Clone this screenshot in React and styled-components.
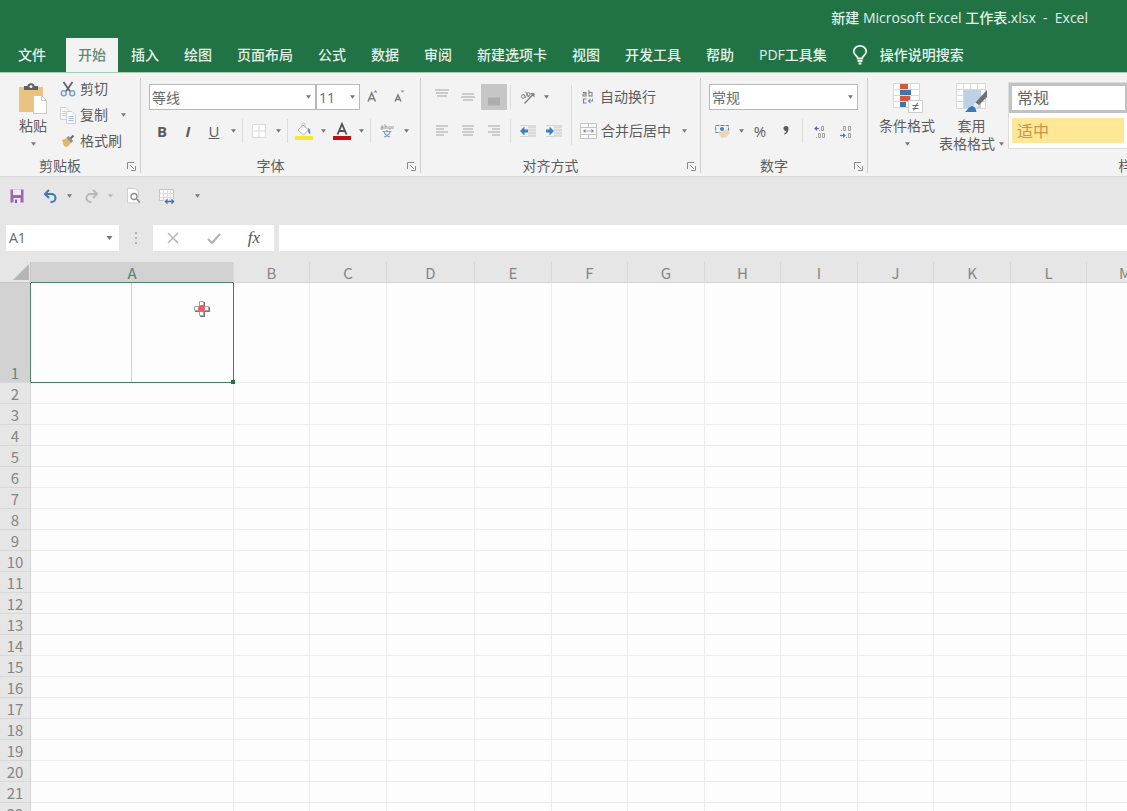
// src/App.jsx
import styled, { createGlobalStyle } from "styled-components";

const GlobalStyle = createGlobalStyle`
  * {
    box-sizing: border-box;
  }

  body {
    margin: 0;
    overflow: hidden;
    background: #fdfdfd;
    font-family: "Open Sans", "Noto Sans CJK SC", sans-serif;
    font-size: 14px;
    color: #5c5c5c;
  }

  button,
  input,
  select {
    margin: 0;
    padding: 0;
    border: 0;
    background: none;
    font: inherit;
    color: inherit;
  }
`;

const Window = styled.div`
  display: flex;
  flex-direction: column;
  height: 100vh;
  overflow: hidden;
`;

/* Title bar and tabs */

const Header = styled.header`
  flex: none;
  background: #217346;
  color: #e4f1e9;
  font-weight: 500;
`;

const TitleBar = styled.div`
  display: flex;
  justify-content: flex-end;
  align-items: center;
  height: 38px;
  padding: 0 39px 4px 0;
  white-space: pre;
`;

const Tabs = styled.nav`
  display: flex;
  height: 34px;
  padding-left: 6px;
`;

const Tab = styled.button`
  flex: none;
  padding: 0 12px;
  margin-right: ${({ $wide }) => ($wide ? 8 : 1)}px;
  line-height: 34px;
  white-space: nowrap;
  background: ${({ $active }) => ($active ? "#f3f3f3" : "transparent")};
  color: ${({ $active }) => ($active ? "#5d8a70" : "#e4f1e9")};
`;

const Search = styled.button`
  display: flex;
  align-items: center;
  gap: 12px;
  margin-left: 12px;
  padding: 0;
  line-height: 34px;
  white-space: nowrap;
`;

/* Ribbon */

const Ribbon = styled.div`
  flex: none;
  display: flex;
  height: 105px;
  overflow: hidden;
  background: #f3f3f3;
  border-top: 1px solid #a5cdb5;
  border-bottom: 1px solid #d8d8d8;
`;

const Group = styled.section`
  flex: 0 0 ${({ $width }) => $width}px;
  display: flex;
  flex-direction: column;
  justify-content: space-between;
  margin: 5px 0 3px;
  border-right: 1px solid #cfcfcf;
`;

const GroupBody = styled.div`
  display: flex;
  height: 78px;
  padding-left: ${({ $left = 8 }) => $left}px;
`;

const GroupFooter = styled.div`
  display: flex;
  align-items: center;
  height: 14px;
  line-height: 14px;
`;

const GroupName = styled.span`
  flex: 1;
  text-align: center;
`;

const Launcher = styled.button`
  display: flex;
  width: 20px;
  padding-left: 6px;
`;

const Stack = styled.div`
  display: flex;
  flex-direction: column;
  gap: 8px;
  padding-top: 6px;
`;

const Row = styled.div`
  display: flex;
  align-items: center;
  height: 26px;
`;

const Tool = styled.button`
  flex: none;
  display: flex;
  align-items: center;
  justify-content: center;
  width: 26px;
  height: 26px;
  font-size: 15px;
  font-weight: ${({ $bold }) => ($bold ? 700 : 400)};
  background: ${({ $pressed }) => ($pressed ? "#c6c6c6" : "transparent")};
`;

const Drop = styled.button`
  flex: none;
  display: flex;
  align-items: center;
  justify-content: center;
  width: 12px;
  height: 20px;
`;

const Divider = styled.span`
  flex: none;
  width: 1px;
  height: ${({ $tall }) => ($tall ? 60 : 24)}px;
  margin: ${({ $tall }) => ($tall ? "7px 8px 0 5px" : "0 3px")};
  background: #dcdcdc;
`;

const LabelButton = styled.button`
  display: flex;
  align-items: center;
  gap: 4px;
  height: 26px;
  line-height: 26px;
  white-space: nowrap;
`;

const Spread = styled(Row)`
  justify-content: space-between;
  width: ${({ $width }) => $width}px;
`;

const ClipboardList = styled.div`
  display: flex;
  flex-direction: column;
  margin: -2px 0 0 12px;
`;

const BigButton = styled.button`
  display: flex;
  flex-direction: column;
  align-items: center;
  padding-top: 5px;
  line-height: 18px;
  white-space: nowrap;

  svg {
    flex: none;
  }
`;

const BigLabel = styled.span`
  display: flex;
  align-items: center;
  justify-content: center;
  gap: 4px;
  height: 18px;
`;

const BigIcon = styled.span`
  display: flex;
  height: 34px;
`;

const SelectBox = styled.span`
  position: relative;
  display: block;
  width: ${({ $width }) => $width}px;
  height: 26px;

  svg {
    position: absolute;
    right: 5px;
    top: 11px;
    pointer-events: none;
  }
`;

const Select = styled.select`
  width: 100%;
  height: 100%;
  padding-left: 2px;
  appearance: none;
  background: #fff;
  border: 1px solid #b8b8b8;
  color: #6a6a6a;
`;

const Gallery = styled.div`
  flex: 1;
  margin: 4px 0 0 4px;
  height: 67px;
  background: #fff;
  border: 1px solid #dcdcdc;
`;

const StyleCell = styled.button`
  display: block;
  width: ${({ $selected }) => ($selected ? 119 : 112)}px;
  height: ${({ $selected }) => ($selected ? 30 : 25)}px;
  margin: ${({ $selected }) => ($selected ? "0" : "5px 3px 0")};
  padding-left: 5px;
  text-align: left;
  font-size: 16px;
  line-height: 22px;
  border: ${({ $selected }) => ($selected ? "3px solid #c2c2c2" : "0")};
  background: ${({ $selected }) => ($selected ? "#fff" : "#ffe798")};
  color: ${({ $selected }) => ($selected ? "#666" : "#c9954a")};
`;

/* Quick access and formula bar */

const QuickBar = styled.div`
  flex: none;
  display: flex;
  align-items: center;
  height: 38px;
  padding-left: 4px;
  background: #e6e6e6;
`;

const Gap = styled.span`
  width: ${({ $width }) => $width}px;
`;

const FormulaBar = styled.div`
  flex: none;
  display: flex;
  align-items: center;
  height: 47px;
  padding: 0 0 1px 6px;
  background: #e6e6e6;
`;

const NameBox = styled.div`
  display: flex;
  align-items: center;
  width: 113px;
  height: 26px;
  padding-right: 4px;
  background: #fff;
`;

const NameInput = styled.input`
  flex: 1;
  min-width: 0;
  padding: 0 0 2px 3px;
  color: #6a6a6a;
  outline: 0;
`;

const Dots = styled.span`
  display: flex;
  justify-content: center;
  width: 34px;
`;

const FormulaTools = styled.div`
  display: flex;
  align-items: center;
  justify-content: space-between;
  width: 121px;
  height: 26px;
  padding: 0 7px;
  background: #fff;
`;

const FxText = styled.em`
  font-family: "Liberation Serif", serif;
  font-size: 17px;
  line-height: 18px;
  color: #555;
`;

const FormulaInput = styled.input`
  flex: 1;
  height: 26px;
  margin-left: 5px;
  padding-left: 4px;
  background: #fff;
  outline: 0;
`;

/* Sheet */

const SheetArea = styled.main`
  flex: 1;
  min-height: 0;
  overflow: hidden;
`;

const Sheet = styled.table`
  table-layout: fixed;
  width: 0;
  border-collapse: separate;
  border-spacing: 0;
  font-family: "Noto Sans CJK SC", sans-serif;
  font-size: 15px;
  line-height: 18px;
`;

const Corner = styled.th`
  padding: 0;
  height: 21px;
  background: #e6e6e6;
  border-right: 1px solid #c4c4c4;
  border-bottom: 1px solid #c4c4c4;

  svg {
    display: block;
    margin-left: auto;
  }
`;

const ColumnHead = styled.th`
  height: 21px;
  padding: 2px 0 0;
  font-weight: 400;
  background: ${({ $selected }) => ($selected ? "#d2d2d2" : "#e6e6e6")};
  color: ${({ $selected }) => ($selected ? "#5c7d6a" : "#858585")};
  border-right: 1px solid #d8d8d8;
  border-bottom: 1px solid ${({ $selected }) => ($selected ? "#4f8467" : "#d4d4d4")};
`;

const RowHead = styled.th`
  height: ${({ $selected }) => ($selected ? 100 : 21)}px;
  padding: 1px 0 0;
  font-weight: 400;
  vertical-align: bottom;
  background: ${({ $selected }) => ($selected ? "#d2d2d2" : "#e6e6e6")};
  color: ${({ $selected }) => ($selected ? "#6b8576" : "#858585")};
  border-right: 1px solid ${({ $selected }) => ($selected ? "#4f8467" : "#d4d4d4")};
  border-bottom: 1px solid #d8d8d8;
`;

const Cell = styled.td`
  padding: 0;
  background: #fdfdfd;
  border-right: 1px solid #ececec;
  border-bottom: 1px solid #ececec;
`;

const ActiveCell = styled.td`
  position: relative;
  height: 100px;
  padding: 0;
  background: #fdfdfd;
  border: 0 solid #417f5e;
  border-width: 0 1px 1px 0;
`;

const Halves = styled.div`
  display: grid;
  grid-template-columns: 1fr 1fr;
  height: 99px;
`;

const Half = styled.div`
  border-right: ${({ $line }) => ($line ? "1px solid #c3d8d0" : "0")};
`;

const FillHandle = styled.span`
  position: absolute;
  right: -2px;
  bottom: -2px;
  width: 4px;
  height: 4px;
  background: #217346;
`;

const Pointer = styled.svg`
  position: absolute;
  left: 162px;
  top: 17px;
`;

const Caret = ({ color = "#777", size = 5 }) => (
  <svg width={size} height="4" viewBox="0 0 6 4" fill={color}>
    <path d="M0 0h6L3 4z" />
  </svg>
);

const DropDown = ({ label, color }) => (
  <Drop aria-label={label}>
    <Caret color={color} />
  </Drop>
);

const LauncherIcon = () => (
  <svg width="11" height="11" viewBox="0 0 11 11" fill="none" stroke="#8a8a8a">
    <path d="M1.5 8V1.5H8M4 4l4 4M9.5 5v4.5H5" />
  </svg>
);

const Footer = ({ name }) => (
  <GroupFooter>
    <GroupName>{name}</GroupName>
    <Launcher aria-label={`${name}设置`}>
      <LauncherIcon />
    </Launcher>
  </GroupFooter>
);

const BulbIcon = () => (
  <svg width="16" height="20" viewBox="0 0 16 20" fill="none" stroke="#e4f1e9" strokeWidth="1.8">
    <path d="M5.8 13.5c0-2.500-4-3.400-4-7a6.200 5.600 0 0 1 12.400 0c0 3.600-4 4.500-4 7z" />
    <path d="M5.500 16h5M6.500 18.500h3" />
  </svg>
);

const PasteIcon = () => (
  <svg width="30" height="31" viewBox="0 0 30 31">
    <path d="M1 4h24v25H1z" fill="#eac282" />
    <path d="M6 3h3.500a3.500 2.800 0 0 1 7 0H20v4H6z" fill="#5d6166" />
    <circle cx="13" cy="3.500" r="1.500" fill="#f3f3f3" />
    <path d="M15.500 12.500h8l5 5v13h-13z" fill="#fff" stroke="#c9c9c9" />
    <path d="M23.500 12.500v5h5" fill="none" stroke="#c9c9c9" />
  </svg>
);

const CutIcon = () => (
  <svg width="16" height="16" viewBox="0 0 16 16" fill="none">
    <path d="M3.500 1l7 10M12.500 1l-7 10" stroke="#5f5f5f" strokeWidth="1.700" />
    <circle cx="3.800" cy="12.300" r="2.500" stroke="#7ca3d4" strokeWidth="1.500" />
    <circle cx="12.200" cy="12.300" r="2.500" stroke="#7ca3d4" strokeWidth="1.500" />
  </svg>
);

const CopyIcon = () => (
  <svg width="16" height="17" viewBox="0 0 16 17" fill="#fafafa" stroke="#ccd1d8">
    <path d="M.5.5H6L9.500 4v8.500h-9z" />
    <path d="M2.500 4.500h4M2.500 6.500h4M2.500 8.500h4" stroke="#b9cfe8" />
    <path d="M6.500 4.500H12L15.500 8v8.500h-9z" />
    <path d="M8.500 9.500h5M8.500 11.500h5M8.500 13.500h5" stroke="#a3bfe0" />
  </svg>
);

const BrushIcon = () => (
  <svg width="16" height="16" viewBox="0 0 16 16">
    <path d="M2 7l5-2 4 5-4 4-3-1z" fill="#e6b668" />
    <path d="M6.500 4.500l2-1.500 4.500 5-2 2z" fill="#8d8d8d" />
    <path d="M10.500 5.500L13.500 2.500" stroke="#666" strokeWidth="2" />
  </svg>
);

const GrowIcon = ({ small }) => (
  <svg width="16" height="16" viewBox="0 0 16 16" fill="none" stroke="#7c7c7c" strokeWidth="1.500">
    {small ? (
      <>
        <path d="M4 12.500L7 6l3 6.500M5 10.500h4" />
        <path d="M9.500 1.500h4l-2 2z" fill="#8a8a8a" stroke="none" />
      </>
    ) : (
      <>
        <path d="M3 12.500L6.700 4l3.700 8.500M4.200 9.800h5" />
        <path d="M8.500 3.500h4l-2-2.500z" fill="#7a92b4" stroke="none" />
      </>
    )}
  </svg>
);

const BorderIcon = () => (
  <svg width="14" height="14" viewBox="0 0 14 14" fill="#fff" stroke="#dadada">
    <path d="M.5.5h13v13H.5zM7 .5v13M.5 7h13" />
  </svg>
);

const FillIcon = () => (
  <svg width="18" height="18" viewBox="0 0 18 18">
    <path d="M3 8l5-5 5.500 5-5 5z" fill="#fff" stroke="#b5b5b5" />
    <path d="M7 6V2.500a1.500 1.500 0 0 1 3 0V6" fill="none" stroke="#c0c0c0" />
    <path d="M13 6c2.500 1 2.500 4 2 6-1.500 0-2-2-2-6z" fill="#5b86bd" />
    <path d="M0 14h18v4H0z" fill="#f2ea34" />
  </svg>
);

const FontColorIcon = () => (
  <svg width="18" height="20" viewBox="0 0 18 20">
    <path d="M4.500 13.500L9 3l4.500 10.500M6 10h6" fill="none" stroke="#505050" strokeWidth="1.800" />
    <path d="M0 15h18v4H0z" fill="#c00f12" />
  </svg>
);

const PhoneticIcon = () => (
  <svg width="14" height="16" viewBox="0 0 14 16" fill="none">
    <path d="M1 3h2v3H1V4.500h2M5 1v5M5 3.500h2V6M9 3v3h2V3M13 3v3" stroke="#a0a0a0" />
    <path
      d="M2.500 8.500h9M7 7v1.500M4 9c1 3 3 4 6 5M10 9c-1 3-3 4-6 5"
      stroke="#7ea4d2"
      strokeWidth="1.200"
    />
  </svg>
);

const LINES = {
  top: "M0 2h14M1 5h12M2 8h10",
  middle: "M1 6h12M0 9h14M2 12h10",
  bottom: "M1 10.500h12M1 12.500h12M1 14.500h12M1 16.500h12",
  left: "M1 4h12M1 7h8M1 10h12M1 13h8",
  center: "M1 4h12M2 7h10M1 10h12M2 13h10",
  right: "M1 4h12M5 7h8M1 10h12M5 13h8",
};

const LinesIcon = ({ kind }) => (
  <svg
    width="14"
    height="18"
    viewBox="0 0 14 18"
    fill="none"
    stroke={kind === "bottom" ? "#adadad" : "#cbcbcb"}
    strokeWidth="2"
  >
    <path d={LINES[kind]} />
  </svg>
);

const OrientIcon = () => (
  <svg width="17" height="17" viewBox="0 0 17 17" fill="none" stroke="#808080">
    <circle cx="4.200" cy="7.500" r="1.800" />
    <path d="M4.500 5l2.500 4M6.500 2.500l3.500 5.500" />
    <circle cx="9.300" cy="5.500" r="1.800" />
    <path d="M5.500 14.500L14.500 5" strokeWidth="1.300" />
    <path d="M11 4h4.500v4.500z" fill="#808080" stroke="none" />
  </svg>
);

const IndentIcon = ({ right }) => (
  <svg width="17" height="14" viewBox="0 0 17 14">
    <path d="M1 1h8v1H1zM1 12h8v1H1z" fill="#d3d3d3" />
    <path d="M9 1h8v12H9z" fill="#dadada" />
    <path d="M9 4h8v1H9zM9 7h8v1H9zM9 10h8v1H9z" fill="#e8e8e8" />
    {right ? (
      <path d="M1 5.500h3.500V2.500L9 7l-4.500 4.500v-3H1z" fill="#3b7fbd" />
    ) : (
      <path d="M9 5.500H5.500V2.500L1 7l4.500 4.500v-3H9z" fill="#3b7fbd" />
    )}
  </svg>
);

const WrapIcon = () => (
  <svg width="16" height="16" viewBox="0 0 16 16" fill="none" stroke="#808080" strokeWidth="1.100">
    <path d="M3 3.500h3V7H3V5h3M9 1v6h3V3.500H9M6.500 10H3.500v4h3" />
    <path d="M12.500 9.500V12H9M10.500 10L8.500 12l2 2" stroke="#7c93be" />
  </svg>
);

const MergeIcon = () => (
  <svg width="17" height="16" viewBox="0 0 17 16" fill="#fafafa" stroke="#c4c4c4">
    <path d="M.5.5h16v15H.5zM.5 4.500h16M.5 11.500h16M8.500.5v4M8.500 11.500v4" />
    <path d="M3.500 8h10" stroke="#a9b8c8" />
    <path d="M5.500 6v4L3 8zM11.500 6v4L14 8z" fill="#6f8cab" stroke="none" />
  </svg>
);

const CurrencyIcon = () => (
  <svg width="17" height="16" viewBox="0 0 17 16">
    <path d="M1.500 2.500h13v7h-13z" fill="#eaf1f7" stroke="#5b89b5" strokeDasharray="4 1" />
    <circle cx="8" cy="6" r="2" fill="#4d7fb0" />
    <path d="M6 9.500l7-3.500 3 3-3 5-5 1-3-3z" fill="#f2d6b2" />
  </svg>
);

const CommaIcon = () => (
  <svg width="8" height="12" viewBox="0 0 8 12" fill="#5b5b5b">
    <path d="M1.500 3.500a2.500 2.500 0 1 1 5 0C6.500 7 5 8.500 2.500 9.500L2 8.700C3.500 8 4 7 4 6 2.500 6 1.500 5 1.500 3.500z" />
  </svg>
);

const DecimalIcon = ({ less }) => (
  <svg width="15" height="15" viewBox="0 0 15 15" fill="none" stroke="#a0a0a0">
    {less ? (
      <>
        <path d="M3 6.500h1M5.500 2.500h2v4h-2zM10.500 2.500h2v4h-2zM8 13.500h1M10.500 9.500h2v4h-2z" />
        <path d="M2 11.500h4" stroke="#4f7fb2" strokeWidth="1.300" />
        <path d="M5 9l3 2.500L5 14z" fill="#4f7fb2" stroke="none" />
      </>
    ) : (
      <>
        <path d="M7 6.500h1M9.500 2.500h2v4h-2zM4 13.500h1M6.500 9.500h2v4h-2zM10.500 9.500h2v4h-2z" />
        <path d="M7 4.500H4" stroke="#5570a8" strokeWidth="1.300" />
        <path d="M5 2L2 4.500 5 7z" fill="#5570a8" stroke="none" />
      </>
    )}
  </svg>
);

const ConditionalIcon = () => (
  <svg width="31" height="30" viewBox="0 0 31 30">
    <path
      d="M1.500.5h26v24h-26zM8.500.5v24M18.500.5v24M1.500 6.500h26M1.500 12.500h26M1.500 18.500h26"
      fill="#fff"
      stroke="#d8d8d8"
    />
    <path d="M8 1h8v5H8zM8 13h10v5H8z" fill="#d3593d" />
    <path d="M8 7h11v5H8zM8 19h6v5H8z" fill="#3f76ab" />
    <path d="M16.500 17.500h14v12h-14z" fill="#fff" stroke="#cbcbcb" />
    <path d="M20.500 22.500h6M20.500 25.500h6M25.500 20l-4 7.500" fill="none" stroke="#666" />
  </svg>
);

const TableFormatIcon = () => (
  <svg width="33" height="30" viewBox="0 0 33 30">
    <path
      d="M1.500.5h29v25h-29zM8.500.5v25M15.500.5v25M22.500.5v25M1.500 6.500h29M1.500 12.500h29M1.500 18.500h29"
      fill="#fff"
      stroke="#d8d8d8"
    />
    <path d="M9 7h17v18H9z" fill="#bcd0e7" />
    <path d="M32 7v7l-8 8-3.500-2.500z" fill="#707070" />
    <path d="M20 19.500l4 3-4 3.500-2-3z" fill="#ececec" />
    <path d="M10 29c2-1 3-5 7-6 3 0 4.500 4 4.500 6z" fill="#3a78bd" />
  </svg>
);

const SaveIcon = () => (
  <svg width="14" height="14" viewBox="0 0 14 14">
    <path d="M.5.500h13v13H.5z" fill="#9a66ad" />
    <path d="M3 .5h8V6H3z" fill="#f1eaf4" />
    <path d="M3.500 9h7v5h-7z" fill="#efe6f2" />
    <path d="M5 10.500h2V14H5z" fill="#83549a" />
  </svg>
);

const UndoIcon = ({ redo }) => (
  <svg
    width="15"
    height="14"
    viewBox="0 0 15 14"
    fill="none"
    stroke={redo ? "#b8b8b8" : "#4177b4"}
    strokeWidth="2"
  >
    <g transform={redo ? "translate(15 0) scale(-1 1)" : undefined}>
      <path d="M2 5h6.500a4 4 0 0 1 0 8H7.500" />
      <path d="M6 1L2 5l4 4" />
    </g>
  </svg>
);

const PreviewIcon = () => (
  <svg width="15" height="16" viewBox="0 0 15 16" fill="none">
    <path d="M1.500.5H9l3.500 3.500v11h-11z" fill="#fcfcfc" stroke="#cecece" />
    <circle cx="8" cy="8.500" r="3" fill="#fff" stroke="#8c8c8c" strokeWidth="1.300" />
    <path d="M10.500 11l3.500 3.500" stroke="#8c8c8c" strokeWidth="1.600" />
  </svg>
);

const WidthIcon = () => (
  <svg width="17" height="17" viewBox="0 0 17 17" fill="none">
    <path d="M1.500 1.500h14v11h-14z" fill="#fafafa" stroke="#c2c2c2" />
    <path d="M5.500 1.500v11M9.500 1.500v11M12.500 1.500v11M1.500 5.500h14M1.500 9.500h14" stroke="#dcdcdc" />
    <path d="M6 11h11v5H6z" fill="#e6e6e6" />
    <path d="M8 13.500h7" stroke="#3d73b0" strokeWidth="1.500" />
    <path d="M9.500 10.500v6l-3-3zM13.500 10.500v6l3-3z" fill="#3d73b0" />
  </svg>
);

const TABS = [
  "文件",
  "开始",
  "插入",
  "绘图",
  "页面布局",
  "公式",
  "数据",
  "审阅",
  "新建选项卡",
  "视图",
  "开发工具",
  "帮助",
  "PDF工具集",
];

const COLUMNS = "ABCDEFGHIJKLMNOPQRSTUVWXYZ".split("");
const ROWS = Array.from({ length: 50 }, (_, i) => i + 1);

const columnWidth = (name, index) => {
  if (name === "A") return 203;
  if (name === "D") return 88;
  return index % 2 ? 76 : 77;
};

function Picker({ label, width, value }) {
  return (
    <SelectBox $width={width}>
      <Select aria-label={label} defaultValue={value}>
        <option>{value}</option>
      </Select>
      <Caret />
    </SelectBox>
  );
}

function ClipboardGroup() {
  return (
    <Group $width={141}>
      <GroupBody $left={18}>
        <BigButton>
          <BigIcon>
            <PasteIcon />
          </BigIcon>
          <BigLabel>粘贴</BigLabel>
          <BigLabel>
            <Caret />
          </BigLabel>
        </BigButton>
        <ClipboardList>
          <LabelButton>
            <CutIcon />
            剪切
          </LabelButton>
          <Spread $width={69}>
            <LabelButton>
              <CopyIcon />
              复制
            </LabelButton>
            <DropDown label="复制选项" />
          </Spread>
          <LabelButton>
            <BrushIcon />
            格式刷
          </LabelButton>
        </ClipboardList>
      </GroupBody>
      <Footer name="剪贴板" />
    </Group>
  );
}

function FontGroup() {
  return (
    <Group $width={280}>
      <GroupBody>
        <Stack>
          <Row>
            <Picker label="字体" width={167} value="等线" />
            <Picker label="字号" width={44} value="11" />
            <Tool aria-label="增大字号">
              <GrowIcon />
            </Tool>
            <Tool aria-label="减小字号">
              <GrowIcon small />
            </Tool>
          </Row>
          <Row>
            <Tool $bold>B</Tool>
            <Tool $bold>
              <i>I</i>
            </Tool>
            <Tool>
              <u>U</u>
            </Tool>
            <DropDown label="下划线选项" />
            <Divider />
            <Tool aria-label="边框">
              <BorderIcon />
            </Tool>
            <DropDown label="边框选项" />
            <Divider />
            <Tool aria-label="填充颜色">
              <FillIcon />
            </Tool>
            <DropDown label="填充颜色选项" />
            <Tool aria-label="字体颜色">
              <FontColorIcon />
            </Tool>
            <DropDown label="字体颜色选项" />
            <Divider />
            <Tool aria-label="拼音">
              <PhoneticIcon />
            </Tool>
            <DropDown label="拼音选项" />
          </Row>
        </Stack>
      </GroupBody>
      <Footer name="字体" />
    </Group>
  );
}

function AlignGroup() {
  return (
    <Group $width={280}>
      <GroupBody>
        <Stack>
          <Row>
            <Tool aria-label="顶端对齐">
              <LinesIcon kind="top" />
            </Tool>
            <Tool aria-label="垂直居中">
              <LinesIcon kind="middle" />
            </Tool>
            <Tool aria-label="底端对齐" $pressed>
              <LinesIcon kind="bottom" />
            </Tool>
            <Divider />
            <Tool aria-label="方向">
              <OrientIcon />
            </Tool>
            <DropDown label="方向选项" />
          </Row>
          <Row>
            <Tool aria-label="左对齐">
              <LinesIcon kind="left" />
            </Tool>
            <Tool aria-label="居中">
              <LinesIcon kind="center" />
            </Tool>
            <Tool aria-label="右对齐">
              <LinesIcon kind="right" />
            </Tool>
            <Divider />
            <Tool aria-label="减少缩进量">
              <IndentIcon />
            </Tool>
            <Tool aria-label="增加缩进量">
              <IndentIcon right />
            </Tool>
          </Row>
        </Stack>
        <Divider $tall />
        <Stack>
          <LabelButton>
            <WrapIcon />
            自动换行
          </LabelButton>
          <Spread $width={110}>
            <LabelButton>
              <MergeIcon />
              合并后居中
            </LabelButton>
            <DropDown label="合并选项" />
          </Spread>
        </Stack>
      </GroupBody>
      <Footer name="对齐方式" />
    </Group>
  );
}

function NumberGroup() {
  return (
    <Group $width={167}>
      <GroupBody>
        <Stack>
          <Row>
            <Picker label="数字格式" width={149} value="常规" />
          </Row>
          <Row>
            <Tool aria-label="会计数字格式">
              <CurrencyIcon />
            </Tool>
            <DropDown label="会计数字格式选项" />
            <Tool>%</Tool>
            <Tool aria-label="千位分隔样式">
              <CommaIcon />
            </Tool>
            <Divider />
            <Tool aria-label="增加小数位数">
              <DecimalIcon />
            </Tool>
            <Tool aria-label="减少小数位数">
              <DecimalIcon less />
            </Tool>
          </Row>
        </Stack>
      </GroupBody>
      <Footer name="数字" />
    </Group>
  );
}

function StylesGroup() {
  return (
    <Group $width={550}>
      <GroupBody $left={11}>
        <BigButton>
          <BigIcon>
            <ConditionalIcon />
          </BigIcon>
          <BigLabel>条件格式</BigLabel>
          <BigLabel>
            <Caret />
          </BigLabel>
        </BigButton>
        <Gap $width={4} />
        <BigButton>
          <BigIcon>
            <TableFormatIcon />
          </BigIcon>
          <BigLabel>套用</BigLabel>
          <BigLabel>
            表格格式
            <Caret />
          </BigLabel>
        </BigButton>
        <Gallery>
          <StyleCell $selected>常规</StyleCell>
          <StyleCell>适中</StyleCell>
        </Gallery>
      </GroupBody>
      <Footer name="样式" />
    </Group>
  );
}

function QuickAccess() {
  return (
    <QuickBar>
      <Tool aria-label="保存">
        <SaveIcon />
      </Tool>
      <Gap $width={7} />
      <Tool aria-label="撤消">
        <UndoIcon />
      </Tool>
      <DropDown label="撤消选项" />
      <Gap $width={3} />
      <Tool aria-label="恢复">
        <UndoIcon redo />
      </Tool>
      <DropDown label="恢复选项" color="#bbb" />
      <Gap $width={4} />
      <Tool aria-label="打印预览">
        <PreviewIcon />
      </Tool>
      <Gap $width={7} />
      <Tool aria-label="列宽">
        <WidthIcon />
      </Tool>
      <Gap $width={12} />
      <DropDown label="自定义快速访问工具栏" />
    </QuickBar>
  );
}

function Formula() {
  return (
    <FormulaBar>
      <NameBox>
        <NameInput aria-label="名称框" defaultValue="A1" />
        <Drop aria-label="名称列表">
          <Caret size={7} />
        </Drop>
      </NameBox>
      <Dots>
        <svg width="3" height="12" viewBox="0 0 3 12" fill="#b0b0b0">
          <path d="M0 0h2v2H0zM0 5h2v2H0zM0 10h2v2H0z" />
        </svg>
      </Dots>
      <FormulaTools>
        <Tool aria-label="取消">
          <svg width="12" height="12" viewBox="0 0 12 12" stroke="#b8b8b8" strokeWidth="1.500">
            <path d="M1 1l10 10M11 1L1 11" />
          </svg>
        </Tool>
        <Tool aria-label="输入">
          <svg width="14" height="11" viewBox="0 0 14 11" fill="none" stroke="#b0b0b0" strokeWidth="2">
            <path d="M1 6l4 4 8-9" />
          </svg>
        </Tool>
        <Tool aria-label="插入函数">
          <FxText>fx</FxText>
        </Tool>
      </FormulaTools>
      <FormulaInput aria-label="编辑栏" />
    </FormulaBar>
  );
}

function Grid() {
  return (
    <SheetArea>
      <Sheet>
        <colgroup>
          <col width="31" />
          {COLUMNS.map((name, i) => (
            <col key={name} width={columnWidth(name, i)} />
          ))}
        </colgroup>
        <thead>
          <tr>
            <Corner aria-label="全选">
              <svg width="18" height="17" viewBox="0 0 18 17" fill="#b5b5b5">
                <path d="M17 0v16H1z" />
              </svg>
            </Corner>
            {COLUMNS.map((name) => (
              <ColumnHead key={name} scope="col" $selected={name === "A"}>
                {name}
              </ColumnHead>
            ))}
          </tr>
        </thead>
        <tbody>
          {ROWS.map((row) => (
            <tr key={row}>
              <RowHead scope="row" $selected={row === 1}>
                {row}
              </RowHead>
              {COLUMNS.map((name) =>
                row === 1 && name === "A" ? (
                  <ActiveCell key={name}>
                    <Halves>
                      <Half $line />
                      <Half />
                    </Halves>
                    <FillHandle />
                    <Pointer width="18" height="18" viewBox="0 0 18 18">
                      <path d="M7 2h5v5h5v5h-5v5H7v-5H2V7h5z" fill="#777" />
                      <path
                        d="M6.500 1.500h4v5h5v4h-5v5h-4v-5h-5v-4h5z"
                        fill="#fff"
                        stroke="#a5a5a5"
                      />
                      <circle cx="8.500" cy="8.500" r="3.500" fill="#ee5a60" />
                    </Pointer>
                  </ActiveCell>
                ) : (
                  <Cell key={name} />
                )
              )}
            </tr>
          ))}
        </tbody>
      </Sheet>
    </SheetArea>
  );
}

export default function App() {
  return (
    <Window>
      <GlobalStyle />
      <Header>
        <TitleBar>{"新建 Microsoft Excel 工作表.xlsx  -  Excel"}</TitleBar>
        <Tabs>
          {TABS.map((tab, i) => (
            <Tab key={tab} $active={tab === "开始"} $wide={i === 0}>
              {tab}
            </Tab>
          ))}
          <Search>
            <BulbIcon />
            操作说明搜索
          </Search>
        </Tabs>
      </Header>
      <Ribbon>
        <ClipboardGroup />
        <FontGroup />
        <AlignGroup />
        <NumberGroup />
        <StylesGroup />
      </Ribbon>
      <QuickAccess />
      <Formula />
      <Grid />
    </Window>
  );
}
